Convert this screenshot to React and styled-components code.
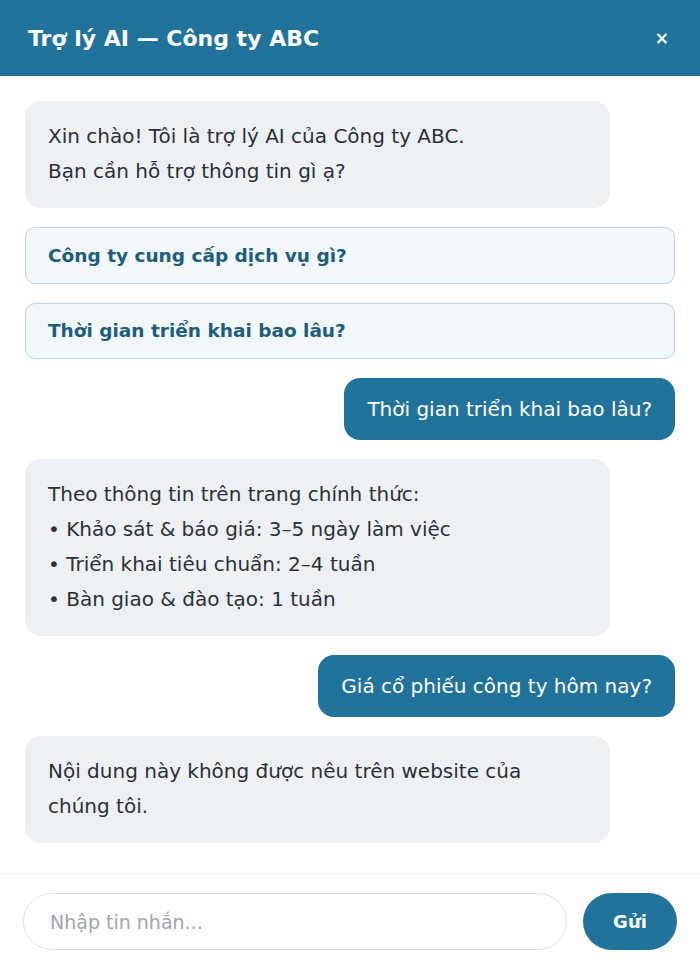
import React from "react";
import styled, { createGlobalStyle } from "styled-components";

const GlobalStyle = createGlobalStyle`
  html, body {
    margin: 0;
    padding: 0;
    background: #ffffff;
  }
  * {
    box-sizing: border-box;
  }
`;

const Widget = styled.div`
  width: 700px;
  height: 970px;
  display: flex;
  flex-direction: column;
  background: #fff;
  font-family: "DejaVu Sans", "Noto Sans", sans-serif;
  color: #2b3038;
  overflow: hidden;
`;

const Header = styled.header`
  height: 76px;
  flex-shrink: 0;
  background-color: #22739b;
  color: #fff;
  display: flex;
  justify-content: space-between;
  align-items: center;
  padding: 0 28px;
`;

const Title = styled.h2`
  margin: 0;
  font-size: 22px;
  font-weight: 700;
`;

const CloseButton = styled.button`
  background: none;
  border: none;
  color: #fff;
  font-size: 17px;
  font-weight: 700;
  padding: 0;
  margin-right: 3px;
  cursor: pointer;
  line-height: 1;
  font-family: inherit;
`;

const Messages = styled.div`
  flex: 1;
  display: flex;
  flex-direction: column;
  gap: 19px;
  padding: 25px 25px 30px;
  overflow: hidden;
`;

const Bubble = styled.div`
  max-width: 90%;
  align-self: ${(p) => (p.$user ? "flex-end" : "flex-start")};
  background: ${(p) => (p.$user ? "#22739b" : "#eef1f4")};
  color: ${(p) => (p.$user ? "#fff" : "#2b3038")};
  border-radius: 16px;
  padding: ${(p) => (p.$user ? "14px 23px" : "18px 23px 19px")};
  font-size: 20px;
  line-height: ${(p) => (p.$user ? "34px" : "35px")};
  width: ${(p) => (p.$user ? "auto" : "90%")};
`;

const Suggestion = styled.button`
  width: 100%;
  text-align: left;
  height: 57px;
  padding: 0 22px;
  background: #f2f7fa;
  border: 1px solid #bcd6e4;
  border-radius: 10px;
  color: #1d5d7c;
  font-family: inherit;
  font-size: 18.5px;
  font-weight: 700;
  cursor: pointer;
`;

const Footer = styled.footer`
  flex-shrink: 0;
  border-top: 1px solid #eceef1;
  padding: 19px 23px 20px;
  display: flex;
  gap: 16px;
  align-items: center;
`;

const Input = styled.input`
  flex: 1;
  height: 57px;
  border: 1px solid #dde0e6;
  border-radius: 29px;
  padding: 0 26px;
  font-family: inherit;
  font-size: 19px;
  color: #2b3038;
  outline: none;

  &::placeholder {
    color: #a0a5b0;
  }
`;

const SendButton = styled.button`
  width: 94px;
  height: 57px;
  border: none;
  border-radius: 29px;
  background: #22739b;
  color: #fff;
  font-family: inherit;
  font-size: 18px;
  font-weight: 700;
  cursor: pointer;
`;

const App = () => {
  return (
    <>
      <GlobalStyle />
      <Widget>
        <Header>
          <Title>Trợ lý AI — Công ty ABC</Title>
          <CloseButton aria-label="Đóng">×</CloseButton>
        </Header>
        <Messages>
          <Bubble>
            Xin chào! Tôi là trợ lý AI của Công ty ABC.
            <br />
            Bạn cần hỗ trợ thông tin gì ạ?
          </Bubble>
          <Suggestion>Công ty cung cấp dịch vụ gì?</Suggestion>
          <Suggestion>Thời gian triển khai bao lâu?</Suggestion>
          <Bubble $user>Thời gian triển khai bao lâu?</Bubble>
          <Bubble>
            Theo thông tin trên trang chính thức:
            <br />• Khảo sát &amp; báo giá: 3–5 ngày làm việc
            <br />• Triển khai tiêu chuẩn: 2–4 tuần
            <br />• Bàn giao &amp; đào tạo: 1 tuần
          </Bubble>
          <Bubble $user>Giá cổ phiếu công ty hôm nay?</Bubble>
          <Bubble>
            Nội dung này không được nêu trên website của chúng tôi.
          </Bubble>
        </Messages>
        <Footer>
          <Input placeholder="Nhập tin nhắn..." />
          <SendButton>Gửi</SendButton>
        </Footer>
      </Widget>
    </>
  );
};

export default App;
